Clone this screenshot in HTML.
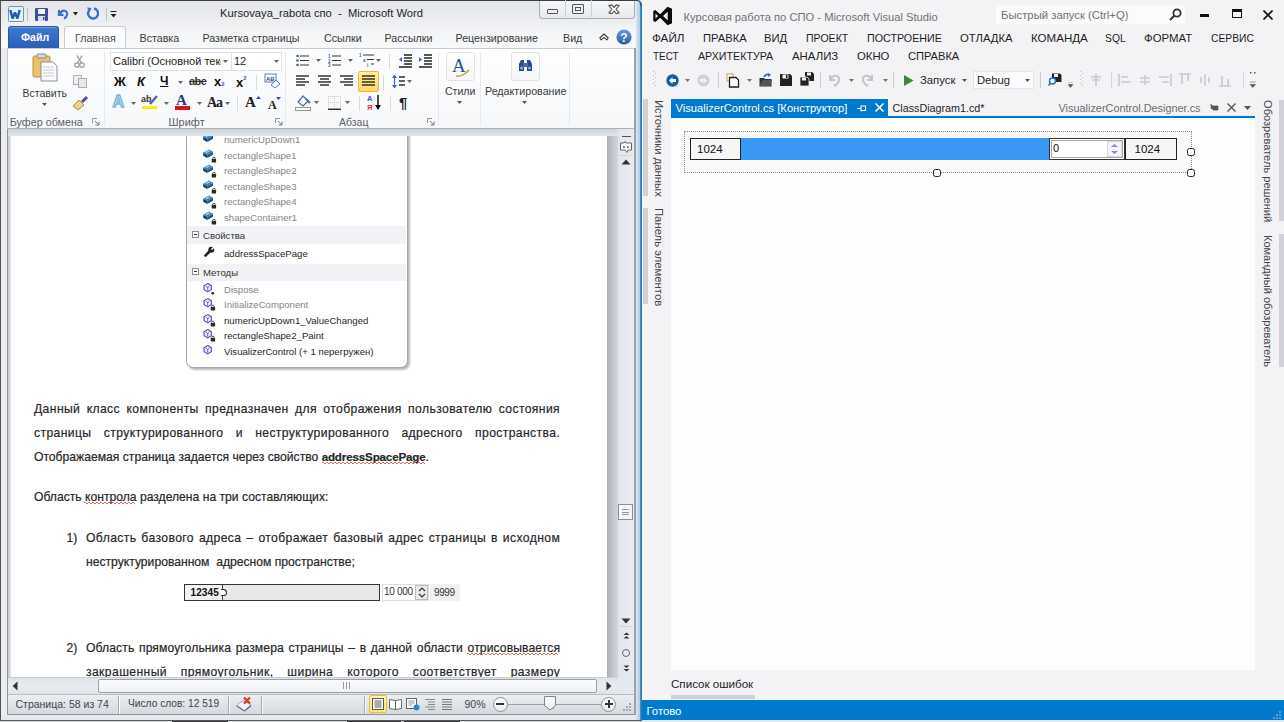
<!DOCTYPE html>
<html><head><meta charset="utf-8">
<style>
*{margin:0;padding:0;box-sizing:border-box}
html,body{width:1284px;height:722px;overflow:hidden;background:#dfe6ee;font-family:"Liberation Sans",sans-serif}
.a{position:absolute}
.t{position:absolute;white-space:nowrap;line-height:1}
#w{position:absolute;left:0;top:0;width:642px;height:722px;background:#e3e9f1;overflow:hidden}
#vs{position:absolute;left:641px;top:0;width:643px;height:722px;background:#eeeef2;overflow:hidden}
.j{position:absolute;white-space:nowrap;line-height:1;display:flex;justify-content:space-between}
</style></head><body>
<div id="w">
  <div class="a" style="left:0;top:0;width:636px;height:1px;background:#3a3e44"></div>
  <div class="a" style="left:0;top:0;width:1px;height:722px;background:#4e5258"></div>
  <div class="a" style="left:1px;top:1px;width:639px;height:25px;background:linear-gradient(#e3e5e8,#eef0f2)"></div>
  <!-- QAT -->
  <svg class="a" style="left:8px;top:6px" width="16" height="16" viewBox="0 0 16 16"><rect x="0.5" y="0.5" width="15" height="15" rx="1" fill="#dff2fb" stroke="#7a8ea6"/><path d="M2.3 4 L4.6 12.5 L7 6.5 L9.4 12.5 L11.7 4" fill="none" stroke="#1e5aa8" stroke-width="2.4" stroke-linejoin="bevel"/></svg>
  <div class="a" style="left:27px;top:8px;width:1px;height:13px;background:#b8c0ca"></div>
  <svg class="a" style="left:35px;top:8px" width="14" height="13" viewBox="0 0 14 13">
    <rect x="0" y="0" width="13" height="13" rx="1" fill="#3f4f9f"/>
    <rect x="3" y="1" width="7" height="5" fill="#f2f4f8"/>
    <rect x="3" y="8" width="7" height="5" fill="#d5dcef"/>
    <rect x="8" y="9" width="1.5" height="3" fill="#3f4f9f"/>
  </svg>
  <svg class="a" style="left:56px;top:7px" width="13" height="13" viewBox="0 0 13 13">
    <path d="M3 3 L3 8 L7.5 8" fill="none" stroke="#3a70c8" stroke-width="2.2"/>
    <path d="M4 7 C6 2 12 3 11 8 C10.5 10 9 11 8 11.5" fill="none" stroke="#3a70c8" stroke-width="2.2"/>
  </svg>
  <svg class="a" style="left:73px;top:12px" width="6" height="4"><path d="M0 0H5L2.5 3.5Z" fill="#222"/></svg>
  <svg class="a" style="left:86px;top:7px" width="13" height="13" viewBox="0 0 13 13">
    <path d="M8 1.5 A5 5 0 1 1 3 3.5" fill="none" stroke="#3a70c8" stroke-width="2.4"/>
    <path d="M1 0.5 L5.5 1 L3.5 5.5 Z" fill="#3a70c8"/>
  </svg>
  <div class="a" style="left:106px;top:8px;width:1px;height:13px;background:#b8c0ca"></div>
  <svg class="a" style="left:110px;top:11px" width="7" height="7"><rect x="0.5" y="0" width="6" height="1" fill="#222"/><path d="M0.5 3H6.5L3.5 6.5Z" fill="#222"/></svg>
  <div class="t" style="left:220px;top:8.2px;font-size:11.2px;color:#1e1e1e">Kursovaya_rabota спо&nbsp; - &nbsp;Microsoft Word</div>
  <!-- window controls -->
  <div class="a" style="left:539px;top:1px;width:96px;height:18px;border:1px solid #b4bcc6;border-top:none;border-radius:0 0 4px 4px;background:linear-gradient(#f6f7f8,#e8e9eb);border-color:#a9adb3"></div>
  <div class="a" style="left:565px;top:0;width:1px;height:17px;background:#c9d0d8"></div>
  <div class="a" style="left:591px;top:0;width:1px;height:17px;background:#c9d0d8"></div>
  <div class="a" style="left:547px;top:9px;width:11px;height:5px;border:1.5px solid #555;border-radius:1px"></div>
  <div class="a" style="left:572px;top:4px;width:12px;height:10px;border:1.5px solid #555;border-radius:1px"></div>
  <div class="a" style="left:575px;top:7px;width:6px;height:4px;border:1.2px solid #555"></div>
  <svg class="a" style="left:607.5px;top:4px" width="12" height="10.5" viewBox="0 0 13 11"><path d="M1 1.5 L4 0.8 L6.5 3.5 L9 0.8 L12 1.5 L8.8 5.5 L12 9.5 L9 10.2 L6.5 7.5 L4 10.2 L1 9.5 L4.2 5.5Z" fill="#fff" stroke="#555" stroke-width="1.3" stroke-linejoin="round"/></svg>
  <!-- tabs row -->
  <div class="a" style="left:1px;top:26px;width:639px;height:22px;background:linear-gradient(#f2f3f5,#f8f9fa)"></div>
  <div class="a" style="left:8px;top:26px;width:51px;height:22px;background:linear-gradient(#4079d0,#2a5db8);border:1px solid #2a55a8;border-bottom:none;box-shadow:inset 0 1px 0 #6a9ae0;border-radius:3px 3px 0 0"></div>
  <div class="t" style="left:21px;top:32px;font-size:10.6px;font-weight:bold;color:#fff">Файл</div>
  <div class="a" style="left:64px;top:26px;width:62px;height:23px;background:linear-gradient(#fdfdfe,#fbfcfd);border:1px solid #c5ccd5;border-bottom:none;border-radius:3px 3px 0 0"></div>
  <div class="t" style="left:75px;top:32.8px;font-size:10.7px;color:#4a4a4a">Главная</div>
  <div class="t" style="left:139.5px;top:32.8px;font-size:10.7px;color:#3b3b3b">Вставка</div>
  <div class="t" style="left:202.5px;top:32.8px;font-size:10.7px;color:#3b3b3b">Разметка страницы</div>
  <div class="t" style="left:324px;top:32.8px;font-size:10.7px;color:#3b3b3b">Ссылки</div>
  <div class="t" style="left:384.5px;top:32.8px;font-size:10.7px;color:#3b3b3b">Рассылки</div>
  <div class="t" style="left:455.5px;top:32.8px;font-size:10.7px;color:#3b3b3b">Рецензирование</div>
  <div class="t" style="left:563px;top:32.8px;font-size:10.7px;color:#3b3b3b">Вид</div>
  <svg class="a" style="left:599px;top:33px" width="10" height="8" viewBox="0 0 10 8"><path d="M0.8 5 L5 1 L9.2 5 L7.8 6.8 L5 4.3 L2.2 6.8Z" fill="#fff" stroke="#3a3a3a" stroke-width="1.1" stroke-linejoin="round"/></svg>
  <svg class="a" style="left:616px;top:28.5px" width="16" height="16" viewBox="0 0 16 16"><defs><linearGradient id="hg" x1="0" y1="0" x2="0" y2="1"><stop offset="0" stop-color="#6a9ae0"/><stop offset="1" stop-color="#2e5aa8"/></linearGradient></defs><circle cx="8" cy="8" r="7.6" fill="url(#hg)"/><text x="8" y="12.8" font-family="Liberation Sans" font-weight="bold" font-size="12" fill="#eef6ff" text-anchor="middle">?</text></svg>
  <!-- ribbon -->
  <div class="a" style="left:7px;top:48px;width:628px;height:81px;background:linear-gradient(#fefefe,#f6f8fa);border:1px solid #c6ccd4;border-bottom:1px solid #a9b0b9"></div>
  <div class="a" style="left:104px;top:52px;width:1px;height:74px;background:#e6e9ed"></div>
  <div class="a" style="left:285px;top:52px;width:1px;height:74px;background:#e6e9ed"></div>
  <div class="a" style="left:438px;top:52px;width:1px;height:74px;background:#e6e9ed"></div>
  <div class="a" style="left:480px;top:52px;width:1px;height:74px;background:#e6e9ed"></div>
  <div class="a" style="left:569px;top:52px;width:1px;height:74px;background:#e6e9ed"></div>
  <!-- clipboard group -->
  <svg class="a" style="left:32px;top:53px" width="27" height="30" viewBox="0 0 27 30">
    <rect x="1" y="3" width="17" height="21" rx="1.5" fill="#e8c36a" stroke="#b89040"/>
    <rect x="5" y="1" width="9" height="4" rx="1" fill="#d8d8d8" stroke="#888"/>
    <path d="M9 9 H21 L25 13 V28 H9 Z" fill="#fbfbfb" stroke="#8a8f99"/>
    <path d="M11 14H22M11 17H22M11 20H22M11 23H22" stroke="#c8d0dc" stroke-width="1"/>
  </svg>
  <div class="t" style="left:22.5px;top:88px;font-size:10.5px;color:#3b3b3b">Вставить</div>
  <svg class="a" style="left:42px;top:103px" width="6" height="4"><path d="M0 0H5L2.5 3Z" fill="#555"/></svg>
  <svg class="a" style="left:74px;top:55px" width="11" height="13" viewBox="0 0 11 13"><path d="M3 0.5 L7.5 8 M8 0.5 L3.5 8" stroke="#9aa0a8" stroke-width="1.4"/><circle cx="3" cy="10" r="2.2" fill="none" stroke="#9aa0a8" stroke-width="1.3"/><circle cx="8" cy="10" r="2.2" fill="none" stroke="#9aa0a8" stroke-width="1.3"/></svg>
  <svg class="a" style="left:73px;top:75px" width="15" height="13" viewBox="0 0 15 13"><rect x="0.5" y="0.5" width="8" height="9" fill="#f0f0f0" stroke="#b0b4ba"/><rect x="5.5" y="3.5" width="8" height="9" fill="#e8e8e8" stroke="#a8acb2"/></svg>
  <svg class="a" style="left:72px;top:96px" width="17" height="15" viewBox="0 0 17 15"><path d="M1 10 L7 4 L12 9 L6 14 Z" fill="#e8d48a" stroke="#a89040"/><path d="M10 6 L15 1" stroke="#5b4aa0" stroke-width="3"/></svg>
  <div class="t" style="left:9.8px;top:116.8px;font-size:10.75px;color:#5a5e66">Буфер обмена</div>
  <svg class="a" style="left:92px;top:118px" width="8" height="8"><path d="M0.5 0.5H5M0.5 0.5V5" stroke="#999" fill="none"/><path d="M3 3L7 7M7 3.5V7H3.5" stroke="#777" fill="none"/></svg>
  <!-- font group -->
  <div class="a" style="left:110px;top:52px;width:172px;height:19px;background:#fff;border:1px solid #dde2e8"></div>
  <div class="a" style="left:231px;top:52px;width:1px;height:19px;background:#dde2e8"></div>
  <div class="t" style="left:113px;top:56px;font-size:11px;color:#222;width:108px;overflow:hidden">Calibri (Основной текст)</div>
  <svg class="a" style="left:223px;top:60px" width="6" height="4"><path d="M0 0H5L2.5 3Z" fill="#666"/></svg>
  <div class="t" style="left:234px;top:56px;font-size:11px;color:#222">12</div>
  <svg class="a" style="left:274px;top:60px" width="6" height="4"><path d="M0 0H5L2.5 3Z" fill="#666"/></svg>
  <div class="t" style="left:114px;top:75px;font-size:13px;font-weight:bold;color:#111">Ж</div>
  <div class="t" style="left:137px;top:75px;font-size:13px;font-weight:bold;font-style:italic;color:#111">К</div>
  <div class="t" style="left:160px;top:75px;font-size:12px;font-weight:bold;color:#111;text-decoration:underline">Ч</div>
  <svg class="a" style="left:178px;top:81px" width="6" height="4"><path d="M0 0H5L2.5 3Z" fill="#666"/></svg>
  <div class="t" style="left:189px;top:76px;font-size:11px;font-weight:bold;color:#333;letter-spacing:-0.5px;text-decoration:line-through">abe</div>
  <div class="t" style="left:214px;top:75px;font-size:13px;font-weight:bold;color:#111">x<span style="font-size:6px;color:#3a5fb0">2</span></div>
  <div class="t" style="left:236px;top:75px;font-size:13px;font-weight:bold;color:#111">x<span style="font-size:6px;vertical-align:7px;color:#3a5fb0">2</span></div>
  <div class="a" style="left:256px;top:75px;width:1px;height:15px;background:#d8dce2"></div>
  <svg class="a" style="left:264px;top:73px" width="17" height="16" viewBox="0 0 17 16"><rect x="1" y="1" width="11" height="8" fill="#fff" stroke="#6080b0"/><text x="2" y="8" font-size="6" font-family="Liberation Sans" font-weight="bold" fill="#2850a0">AB</text><path d="M7 12 L12 7 L16 11 L11 15 Z" fill="#f4f6fa" stroke="#6080b0"/></svg>
  <div class="t" style="left:112.5px;top:94px;font-size:16px;font-weight:bold;color:#d8eefc;-webkit-text-stroke:1.3px #7ab4e0">A</div>
  <svg class="a" style="left:131px;top:102px" width="6" height="4"><path d="M0 0H5L2.5 3Z" fill="#666"/></svg>
  <svg class="a" style="left:141px;top:93px" width="18" height="17" viewBox="0 0 18 17"><text x="0" y="9" font-size="9" font-family="Liberation Sans" font-weight="bold" fill="#333">ab</text><path d="M9 11 L16 3" stroke="#6a5ab8" stroke-width="2.5"/><rect x="1" y="13" width="15" height="3" fill="#f8f000"/></svg>
  <svg class="a" style="left:164px;top:102px" width="6" height="4"><path d="M0 0H5L2.5 3Z" fill="#666"/></svg>
  <div class="t" style="left:176px;top:93px;font-size:15px;font-family:'Liberation Serif';font-weight:bold;color:#1a3f8a">A</div>
  <div class="a" style="left:175px;top:106px;width:15px;height:4px;background:#e01010"></div>
  <svg class="a" style="left:197px;top:102px" width="6" height="4"><path d="M0 0H5L2.5 3Z" fill="#666"/></svg>
  <div class="t" style="left:207px;top:96px;font-size:14px;font-family:'Liberation Serif';font-weight:bold;color:#222;letter-spacing:-1px">Aa</div>
  <svg class="a" style="left:225px;top:102px" width="6" height="4"><path d="M0 0H5L2.5 3Z" fill="#666"/></svg>
  <div class="a" style="left:237px;top:96px;width:1px;height:15px;background:#d8dce2"></div>
  <div class="t" style="left:245px;top:95px;font-size:15px;font-family:'Liberation Serif';font-weight:bold;color:#222">A</div>
  <svg class="a" style="left:256px;top:96px" width="5" height="4"><path d="M0 3H5L2.5 0Z" fill="#3050a0"/></svg>
  <div class="t" style="left:268px;top:99px;font-size:12px;font-family:'Liberation Serif';font-weight:bold;color:#222">A</div>
  <svg class="a" style="left:276px;top:97px" width="5" height="4"><path d="M0 0H5L2.5 3Z" fill="#3050a0"/></svg>
  <div class="t" style="left:168.5px;top:116.8px;font-size:11px;color:#5a5e66">Шрифт</div>
  <svg class="a" style="left:275px;top:118px" width="8" height="8"><path d="M0.5 0.5H5M0.5 0.5V5" stroke="#999" fill="none"/><path d="M3 3L7 7M7 3.5V7H3.5" stroke="#777" fill="none"/></svg>
  <!-- paragraph group -->
  <svg class="a" style="left:296px;top:54px" width="14" height="13" viewBox="0 0 14 13"><g fill="#3a5fa8"><circle cx="1.5" cy="2" r="1.3"/><circle cx="1.5" cy="6.5" r="1.3"/><circle cx="1.5" cy="11" r="1.3"/></g><g stroke="#333" stroke-width="1.2"><path d="M4 2H13M4 6.5H13M4 11H13"/></g></svg>
  <svg class="a" style="left:316px;top:59px" width="6" height="4"><path d="M0 0H5L2.5 3Z" fill="#666"/></svg>
  <svg class="a" style="left:328px;top:54px" width="14" height="13" viewBox="0 0 14 13"><g fill="#3a5fa8" font-size="4.5" font-family="Liberation Sans" font-weight="bold"><text x="0" y="4">1</text><text x="0" y="8.5">2</text><text x="0" y="13">3</text></g><g stroke="#333" stroke-width="1.2"><path d="M4 2H13M4 6.5H13M4 11H13"/></g></svg>
  <svg class="a" style="left:348px;top:59px" width="6" height="4"><path d="M0 0H5L2.5 3Z" fill="#666"/></svg>
  <svg class="a" style="left:359px;top:53px" width="18" height="15" viewBox="0 0 18 15"><g fill="#3a5fa8" font-size="4.5" font-family="Liberation Sans" font-weight="bold"><text x="0" y="4">1</text><text x="4" y="8.5">a</text><text x="8" y="14">i</text></g><g stroke="#333" stroke-width="1.2"><path d="M4 2H15M8 6.5H15M12 11H15"/></g></svg>
  <svg class="a" style="left:376px;top:59px" width="6" height="4"><path d="M0 0H5L2.5 3Z" fill="#666"/></svg>
  <div class="a" style="left:389px;top:54px;width:1px;height:15px;background:#d8dce2"></div>
  <svg class="a" style="left:398px;top:53px" width="15" height="15" viewBox="0 0 15 15"><g stroke="#222" stroke-width="1.3"><path d="M6 2H14M6 5H14M6 8H14M6 11H14M1 14H14"/></g><path d="M1 6.5L4 4V9Z" fill="#3a6ab8"/></svg>
  <svg class="a" style="left:418px;top:53px" width="15" height="15" viewBox="0 0 15 15"><g stroke="#222" stroke-width="1.3"><path d="M6 2H14M6 5H14M6 8H14M6 11H14M1 14H14"/></g><path d="M4 6.5L1 4V9Z" fill="#3a6ab8"/></svg>
  <svg class="a" style="left:296px;top:75px" width="14" height="12" viewBox="0 0 14 12"><g stroke="#333" stroke-width="1.4"><path d="M0 1H13M0 4H9M0 7H13M0 10H9"/></g></svg>
  <svg class="a" style="left:318px;top:75px" width="14" height="12" viewBox="0 0 14 12"><g stroke="#333" stroke-width="1.4"><path d="M0 1H13M2 4H11M0 7H13M2 10H11"/></g></svg>
  <svg class="a" style="left:340px;top:75px" width="14" height="12" viewBox="0 0 14 12"><g stroke="#333" stroke-width="1.4"><path d="M0 1H13M4 4H13M0 7H13M4 10H13"/></g></svg>
  <div class="a" style="left:358px;top:71px;width:21px;height:21px;background:linear-gradient(#fff2a8,#ffd860);border:1px solid #e2b840;border-radius:2px"></div>
  <svg class="a" style="left:362px;top:75px" width="14" height="12" viewBox="0 0 14 12"><g stroke="#3a3020" stroke-width="1.4"><path d="M0 1H13M0 4H13M0 7H13M0 10H13"/></g></svg>
  <div class="a" style="left:383px;top:75px;width:1px;height:15px;background:#d8dce2"></div>
  <svg class="a" style="left:392px;top:74px" width="22" height="15" viewBox="0 0 22 15"><path d="M2.5 1V14" stroke="#3a6ab8" stroke-width="1.2"/><path d="M0 4L2.5 0.5L5 4ZM0 11L2.5 14.5L5 11Z" fill="#3a6ab8"/><g stroke="#333" stroke-width="1.3"><path d="M7 3H13M7 7H13M7 11H13"/></g><path d="M15 6H20L17.5 9Z" fill="#666"/></svg>
  <svg class="a" style="left:295px;top:94px" width="24" height="17" viewBox="0 0 24 17"><path d="M3 8L8 2L13 7L8 12Z" fill="#fff" stroke="#4a6ab0" stroke-width="1.2"/><path d="M11 5 L15 9" stroke="#4a6ab0" stroke-width="2"/><rect x="0.5" y="13.5" width="15" height="3" fill="#fff" stroke="#999"/><path d="M19 7H24L21.5 10Z" fill="#666"/></svg>
  <svg class="a" style="left:328px;top:96px" width="23" height="14" viewBox="0 0 23 14"><g stroke="#bbb" stroke-width="0.8" stroke-dasharray="1 1" fill="none"><rect x="0.5" y="0.5" width="12" height="12"/><path d="M6.5 0V13M0 6.5H13"/></g><path d="M0 13.3H13" stroke="#222" stroke-width="1.3"/><path d="M17 5H22L19.5 8Z" fill="#666"/></svg>
  <div class="a" style="left:359px;top:96px;width:1px;height:15px;background:#d8dce2"></div>
  <svg class="a" style="left:367px;top:94px" width="15" height="17" viewBox="0 0 15 17"><text x="0" y="7" font-size="7.5" font-family="Liberation Sans" font-weight="bold" fill="#3a5aa8">A</text><text x="0" y="15.5" font-size="7.5" font-family="Liberation Sans" font-weight="bold" fill="#d03030">Я</text><path d="M11 1V15" stroke="#111" stroke-width="1.5"/><path d="M8 11L11 16L14 11Z" fill="#111"/></svg>
  <div class="a" style="left:390px;top:96px;width:1px;height:15px;background:#d8dce2"></div>
  <div class="t" style="left:399px;top:95px;font-size:15px;font-weight:bold;color:#222">¶</div>
  <div class="t" style="left:339px;top:117px;font-size:10.5px;color:#5a5e66">Абзац</div>
  <svg class="a" style="left:427px;top:118px" width="8" height="8"><path d="M0.5 0.5H5M0.5 0.5V5" stroke="#999" fill="none"/><path d="M3 3L7 7M7 3.5V7H3.5" stroke="#777" fill="none"/></svg>
  <!-- styles group -->
  <div class="a" style="left:446px;top:52px;width:29px;height:29px;border:1px solid #dfe3e8;border-radius:3px;background:linear-gradient(#fff,#f4f6f8)"></div>
  <div class="t" style="left:452px;top:56px;font-size:19px;font-family:'Liberation Serif';color:#2a4f9a">A</div>
  <svg class="a" style="left:455px;top:68px" width="16" height="10" viewBox="0 0 16 10"><path d="M1 8 C5 9 11 6 14 2" fill="none" stroke="#d0a030" stroke-width="1.6"/></svg>
  <div class="t" style="left:445px;top:86px;font-size:10.5px;color:#3b3b3b">Стили</div>
  <svg class="a" style="left:457px;top:101px" width="6" height="4"><path d="M0 0H5L2.5 3Z" fill="#555"/></svg>
  <div class="a" style="left:511px;top:52px;width:29px;height:29px;border:1px solid #dfe3e8;border-radius:3px;background:linear-gradient(#fff,#f4f6f8)"></div>
  <svg class="a" style="left:518px;top:59px" width="15" height="13" viewBox="0 0 15 13"><path d="M1 12V5L3 1H6V12ZM9 12V1H12L14 5V12Z" fill="#2a4a8a"/><rect x="5" y="4" width="5" height="4" fill="#4a6aaa"/><circle cx="3.5" cy="9" r="1.5" fill="#8ab0e0"/><circle cx="11.5" cy="9" r="1.5" fill="#8ab0e0"/></svg>
  <div class="t" style="left:485px;top:86px;font-size:10.7px;color:#3b3b3b">Редактирование</div>
  <svg class="a" style="left:522px;top:101px" width="6" height="4"><path d="M0 0H5L2.5 3Z" fill="#555"/></svg>
  <!-- gray band -->
  <div class="a" style="left:1px;top:129px;width:634px;height:7px;background:linear-gradient(#cfd5dc,#e1e5ea)"></div>
<div class="a" style="left:8px;top:136px;width:599px;height:541px;overflow:hidden;background:#fff">
<div class="a" style="left:-8px;top:-136px;width:1284px;height:722px">
<div class="a" style="left:8px;top:136px;width:3px;height:541px;background:linear-gradient(90deg,#c4c6ca,#e6e8eb)"></div>
<div class="a" style="left:186px;top:100px;width:222px;height:268px;border:1px solid #a3a8ae;border-top:none;border-radius:0 0 7px 7px;background:#fff;box-shadow:2px 2px 2px rgba(0,0,0,.28)"></div>
<div class="a" style="left:187px;top:226px;width:219px;height:18px;background:#f0f2f5"></div>
<div class="a" style="left:187px;top:264px;width:219px;height:17px;background:#f0f2f5"></div>
<div class="t" style="left:224px;top:134.5px;font-size:9.6px;color:#868686">numericUpDown1</div>
<svg class="a" style="left:203px;top:133px" width="14" height="14" viewBox="0 0 14 14"><path d="M0.2 3.8 L6 0.5 L10 2.7 L4.2 6Z" fill="#3a88c8"/><path d="M0.2 3.8 L4.2 6 V9 L0.2 6.8Z" fill="#0e3e68"/><path d="M4.2 6 L10 2.7 V5.8 L4.2 9Z" fill="#165890"/><path d="M3 3.6 L6.5 1.8" stroke="#e8f4ff" stroke-width="0.9"/></svg>
<div class="t" style="left:224px;top:150.7px;font-size:9.6px;color:#868686">rectangleShape1</div>
<svg class="a" style="left:203px;top:149px" width="14" height="14" viewBox="0 0 14 14"><path d="M0.2 3.8 L6 0.5 L10 2.7 L4.2 6Z" fill="#3a88c8"/><path d="M0.2 3.8 L4.2 6 V9 L0.2 6.8Z" fill="#0e3e68"/><path d="M4.2 6 L10 2.7 V5.8 L4.2 9Z" fill="#165890"/><path d="M3 3.6 L6.5 1.8" stroke="#e8f4ff" stroke-width="0.9"/><rect x="8.7" y="10" width="4.4" height="3.4" rx="0.5" fill="#2a2a2a"/><path d="M9.7 10.2 V9.4 A1.2 1.2 0 0 1 12.1 9.4 V10.2" stroke="#2a2a2a" fill="none" stroke-width="0.9"/></svg>
<div class="t" style="left:224px;top:166.2px;font-size:9.6px;color:#868686">rectangleShape2</div>
<svg class="a" style="left:203px;top:164px" width="14" height="14" viewBox="0 0 14 14"><path d="M0.2 3.8 L6 0.5 L10 2.7 L4.2 6Z" fill="#3a88c8"/><path d="M0.2 3.8 L4.2 6 V9 L0.2 6.8Z" fill="#0e3e68"/><path d="M4.2 6 L10 2.7 V5.8 L4.2 9Z" fill="#165890"/><path d="M3 3.6 L6.5 1.8" stroke="#e8f4ff" stroke-width="0.9"/><rect x="8.7" y="10" width="4.4" height="3.4" rx="0.5" fill="#2a2a2a"/><path d="M9.7 10.2 V9.4 A1.2 1.2 0 0 1 12.1 9.4 V10.2" stroke="#2a2a2a" fill="none" stroke-width="0.9"/></svg>
<div class="t" style="left:224px;top:181.7px;font-size:9.6px;color:#868686">rectangleShape3</div>
<svg class="a" style="left:203px;top:180px" width="14" height="14" viewBox="0 0 14 14"><path d="M0.2 3.8 L6 0.5 L10 2.7 L4.2 6Z" fill="#3a88c8"/><path d="M0.2 3.8 L4.2 6 V9 L0.2 6.8Z" fill="#0e3e68"/><path d="M4.2 6 L10 2.7 V5.8 L4.2 9Z" fill="#165890"/><path d="M3 3.6 L6.5 1.8" stroke="#e8f4ff" stroke-width="0.9"/><rect x="8.7" y="10" width="4.4" height="3.4" rx="0.5" fill="#2a2a2a"/><path d="M9.7 10.2 V9.4 A1.2 1.2 0 0 1 12.1 9.4 V10.2" stroke="#2a2a2a" fill="none" stroke-width="0.9"/></svg>
<div class="t" style="left:224px;top:197.2px;font-size:9.6px;color:#868686">rectangleShape4</div>
<svg class="a" style="left:203px;top:195px" width="14" height="14" viewBox="0 0 14 14"><path d="M0.2 3.8 L6 0.5 L10 2.7 L4.2 6Z" fill="#3a88c8"/><path d="M0.2 3.8 L4.2 6 V9 L0.2 6.8Z" fill="#0e3e68"/><path d="M4.2 6 L10 2.7 V5.8 L4.2 9Z" fill="#165890"/><path d="M3 3.6 L6.5 1.8" stroke="#e8f4ff" stroke-width="0.9"/><rect x="8.7" y="10" width="4.4" height="3.4" rx="0.5" fill="#2a2a2a"/><path d="M9.7 10.2 V9.4 A1.2 1.2 0 0 1 12.1 9.4 V10.2" stroke="#2a2a2a" fill="none" stroke-width="0.9"/></svg>
<div class="t" style="left:224px;top:212.7px;font-size:9.6px;color:#868686">shapeContainer1</div>
<svg class="a" style="left:203px;top:211px" width="14" height="14" viewBox="0 0 14 14"><path d="M0.2 3.8 L6 0.5 L10 2.7 L4.2 6Z" fill="#3a88c8"/><path d="M0.2 3.8 L4.2 6 V9 L0.2 6.8Z" fill="#0e3e68"/><path d="M4.2 6 L10 2.7 V5.8 L4.2 9Z" fill="#165890"/><path d="M3 3.6 L6.5 1.8" stroke="#e8f4ff" stroke-width="0.9"/><rect x="8.7" y="10" width="4.4" height="3.4" rx="0.5" fill="#2a2a2a"/><path d="M9.7 10.2 V9.4 A1.2 1.2 0 0 1 12.1 9.4 V10.2" stroke="#2a2a2a" fill="none" stroke-width="0.9"/></svg>
<div class="t" style="left:224px;top:248.7px;font-size:9.6px;color:#262626">addressSpacePage</div>
<svg class="a" style="left:204px;top:246px" width="11" height="11" viewBox="0 0 11 11"><path d="M1.5 9.5 L6 5" stroke="#222" stroke-width="2.6" stroke-linecap="round"/><circle cx="7.3" cy="3.7" r="3" fill="#222"/><path d="M7.5 3.5 L10 1" stroke="#fff" stroke-width="1.6"/></svg>
<div class="t" style="left:224px;top:284.6px;font-size:9.6px;color:#868686">Dispose</div>
<svg class="a" style="left:202px;top:282px" width="14" height="14" viewBox="0 0 14 14"><path d="M5.7 1.6 L9.3 3.7 V7.7 L5.7 9.8 L2.1 7.7 V3.7Z" fill="#f4f0fb" stroke="#6a50b8" stroke-width="1.2"/><path d="M5.7 5 V8.6 M4 4.2 L5.7 5.4 L7.4 4.2" stroke="#6a50b8" stroke-width="0.9" fill="none"/><circle cx="10.8" cy="11.3" r="1.3" fill="#222"/></svg>
<div class="t" style="left:224px;top:300.1px;font-size:9.6px;color:#868686">InitializeComponent</div>
<svg class="a" style="left:202px;top:297px" width="14" height="14" viewBox="0 0 14 14"><path d="M5.7 1.6 L9.3 3.7 V7.7 L5.7 9.8 L2.1 7.7 V3.7Z" fill="#f4f0fb" stroke="#6a50b8" stroke-width="1.2"/><path d="M5.7 5 V8.6 M4 4.2 L5.7 5.4 L7.4 4.2" stroke="#6a50b8" stroke-width="0.9" fill="none"/><rect x="8.7" y="10" width="4.4" height="3.4" rx="0.5" fill="#2a2a2a"/><path d="M9.7 10.2 V9.4 A1.2 1.2 0 0 1 12.1 9.4 V10.2" stroke="#2a2a2a" fill="none" stroke-width="0.9"/></svg>
<div class="t" style="left:224px;top:315.6px;font-size:9.6px;color:#262626">numericUpDown1_ValueChanged</div>
<svg class="a" style="left:202px;top:313px" width="14" height="14" viewBox="0 0 14 14"><path d="M5.7 1.6 L9.3 3.7 V7.7 L5.7 9.8 L2.1 7.7 V3.7Z" fill="#f4f0fb" stroke="#6a50b8" stroke-width="1.2"/><path d="M5.7 5 V8.6 M4 4.2 L5.7 5.4 L7.4 4.2" stroke="#6a50b8" stroke-width="0.9" fill="none"/><rect x="8.7" y="10" width="4.4" height="3.4" rx="0.5" fill="#2a2a2a"/><path d="M9.7 10.2 V9.4 A1.2 1.2 0 0 1 12.1 9.4 V10.2" stroke="#2a2a2a" fill="none" stroke-width="0.9"/></svg>
<div class="t" style="left:224px;top:331.1px;font-size:9.6px;color:#262626">rectangleShape2_Paint</div>
<svg class="a" style="left:202px;top:328px" width="14" height="14" viewBox="0 0 14 14"><path d="M5.7 1.6 L9.3 3.7 V7.7 L5.7 9.8 L2.1 7.7 V3.7Z" fill="#f4f0fb" stroke="#6a50b8" stroke-width="1.2"/><path d="M5.7 5 V8.6 M4 4.2 L5.7 5.4 L7.4 4.2" stroke="#6a50b8" stroke-width="0.9" fill="none"/><rect x="8.7" y="10" width="4.4" height="3.4" rx="0.5" fill="#2a2a2a"/><path d="M9.7 10.2 V9.4 A1.2 1.2 0 0 1 12.1 9.4 V10.2" stroke="#2a2a2a" fill="none" stroke-width="0.9"/></svg>
<div class="t" style="left:224px;top:346.6px;font-size:9.6px;color:#262626">VisualizerControl (+ 1 перегружен)</div>
<svg class="a" style="left:202px;top:344px" width="14" height="14" viewBox="0 0 14 14"><path d="M5.7 1.6 L9.3 3.7 V7.7 L5.7 9.8 L2.1 7.7 V3.7Z" fill="#f4f0fb" stroke="#6a50b8" stroke-width="1.2"/><path d="M5.7 5 V8.6 M4 4.2 L5.7 5.4 L7.4 4.2" stroke="#6a50b8" stroke-width="0.9" fill="none"/></svg>
<div class="t" style="left:203px;top:230.5px;font-size:9.6px;color:#333">Свойства</div>
<div class="a" style="left:192px;top:231px;width:7px;height:7px;border:1px solid #8a8f96;background:#fff"></div><div class="a" style="left:194px;top:234px;width:3px;height:1px;background:#333"></div>
<div class="t" style="left:203px;top:267.6px;font-size:9.6px;color:#333">Методы</div>
<div class="a" style="left:192px;top:268px;width:7px;height:7px;border:1px solid #8a8f96;background:#fff"></div><div class="a" style="left:194px;top:271px;width:3px;height:1px;background:#333"></div>
<div class="j" style="left:34px;top:403.0px;width:526.2px;font-size:12.15px;color:#262626;letter-spacing:0.4px;-webkit-text-stroke:0.2px #2a2a2a;"><span>Данный</span><span>класс</span><span>компоненты</span><span>предназначен</span><span>для</span><span>отображения</span><span>пользователю</span><span>состояния</span></div>
<div class="j" style="left:34px;top:427.0px;width:526.2px;font-size:12.15px;color:#262626;letter-spacing:0.4px;-webkit-text-stroke:0.2px #2a2a2a;"><span>страницы</span><span>структурированного</span><span>и</span><span>неструктурированного</span><span>адресного</span><span>пространства.</span></div>
<div class="t" style="left:34px;top:451.1px;font-size:12.15px;color:#262626;-webkit-text-stroke:0.2px #2a2a2a;">Отображаемая страница задается через свойство <b style="font-size:11.6px;letter-spacing:-0.15px">addressSpacePage</b>.</div>
<div class="t" style="left:34px;top:491.0px;font-size:12.15px;color:#262626;-webkit-text-stroke:0.2px #2a2a2a;">Область контрола разделена на три составляющих:</div>
<div class="t" style="left:66.5px;top:532.3px;font-size:12.15px;color:#262626;-webkit-text-stroke:0.2px #2a2a2a;">1)</div>
<div class="j" style="left:86px;top:532.3px;width:474.2px;font-size:12.15px;color:#262626;letter-spacing:0.4px;-webkit-text-stroke:0.2px #2a2a2a;"><span>Область</span><span>базового</span><span>адреса</span><span>–</span><span>отображает</span><span>базовый</span><span>адрес</span><span>страницы</span><span>в</span><span>исходном</span></div>
<div class="t" style="left:86px;top:556.4px;font-size:12.15px;color:#262626;-webkit-text-stroke:0.2px #2a2a2a;">неструктурированном&nbsp; адресном пространстве;</div>
<div class="t" style="left:66.5px;top:641.9px;font-size:12.15px;color:#262626;-webkit-text-stroke:0.2px #2a2a2a;">2)</div>
<div class="j" style="left:86px;top:641.9px;width:474.2px;font-size:12.15px;color:#262626;letter-spacing:0.1px;-webkit-text-stroke:0.2px #2a2a2a;"><span>Область</span><span>прямоугольника</span><span>размера</span><span>страницы</span><span>–</span><span>в</span><span>данной</span><span>области</span><span>отрисовывается</span></div>
<div class="j" style="left:86px;top:665.8px;width:474.2px;font-size:12.15px;color:#262626;letter-spacing:0.4px;-webkit-text-stroke:0.2px #2a2a2a;"><span>закрашенный</span><span>прямоугольник,</span><span>ширина</span><span>которого</span><span>соответствует</span><span>размеру</span></div>
<svg class="a" style="left:84px;top:502px" width="53" height="3"><path d="M0 1 L1 0 L3 2 L5 0 L7 2 L9 0 L11 2 L13 0 L15 2 L17 0 L19 2 L21 0 L23 2 L25 0 L27 2 L29 0 L31 2 L33 0 L35 2 L37 0 L39 2 L41 0 L43 2 L45 0 L47 2 L49 0 L51 2" fill="none" stroke="#e04040" stroke-width="0.8"/></svg>
<svg class="a" style="left:322px;top:462px" width="104" height="3"><path d="M0 1 L1 0 L3 2 L5 0 L7 2 L9 0 L11 2 L13 0 L15 2 L17 0 L19 2 L21 0 L23 2 L25 0 L27 2 L29 0 L31 2 L33 0 L35 2 L37 0 L39 2 L41 0 L43 2 L45 0 L47 2 L49 0 L51 2 L53 0 L55 2 L57 0 L59 2 L61 0 L63 2 L65 0 L67 2 L69 0 L71 2 L73 0 L75 2 L77 0 L79 2 L81 0 L83 2 L85 0 L87 2 L89 0 L91 2 L93 0 L95 2 L97 0 L99 2 L101 0 L103 2" fill="none" stroke="#e04040" stroke-width="0.8"/></svg>
<svg class="a" style="left:467px;top:653px" width="93" height="3"><path d="M0 1 L1 0 L3 2 L5 0 L7 2 L9 0 L11 2 L13 0 L15 2 L17 0 L19 2 L21 0 L23 2 L25 0 L27 2 L29 0 L31 2 L33 0 L35 2 L37 0 L39 2 L41 0 L43 2 L45 0 L47 2 L49 0 L51 2 L53 0 L55 2 L57 0 L59 2 L61 0 L63 2 L65 0 L67 2 L69 0 L71 2 L73 0 L75 2 L77 0 L79 2 L81 0 L83 2 L85 0 L87 2 L89 0 L91 2" fill="none" stroke="#e04040" stroke-width="0.8"/></svg>
<div class="a" style="left:184px;top:584px;width:196px;height:17px;background:#e8e8e8;border:1px solid #333"></div>
<div class="a" style="left:185px;top:585px;width:37px;height:15px;background:#f2f2f2"></div>
<div class="a" style="left:222px;top:585px;width:1px;height:15px;background:#444"></div>
<div class="a" style="left:221px;top:589px;width:6px;height:7px;border:1.2px solid #333;border-left:none;border-radius:0 50% 50% 0;background:#fff"></div>
<div class="t" style="left:190.5px;top:587.5px;font-size:10px;font-weight:bold;color:#111;letter-spacing:0.1px">12345</div>
<div class="a" style="left:382px;top:584px;width:47px;height:17px;background:#fff;border:1px solid #ddd"></div>
<div class="t" style="left:384px;top:587px;font-size:10px;color:#333;letter-spacing:-0.3px">10 000</div>
<div class="a" style="left:415px;top:585px;width:13px;height:15px;background:#eaeaea;border:1px solid #bbb"></div>
<svg class="a" style="left:418px;top:587px" width="8" height="11"><path d="M1 4L4 1L7 4M1 7L4 10L7 7" fill="none" stroke="#333" stroke-width="1.2"/></svg>
<div class="a" style="left:430px;top:584px;width:30px;height:17px;background:#f0f0f0"></div>
<div class="t" style="left:434px;top:587.5px;font-size:10px;color:#333;letter-spacing:-0.4px">9999</div>
</div></div>  <!-- vertical scroll area -->
  <div class="a" style="left:607px;top:136px;width:11px;height:541px;background:linear-gradient(90deg,#a9adb4,#c5c9cf 60%,#d3d7dc)"></div>
  <div class="a" style="left:618px;top:129px;width:16px;height:548px;background:linear-gradient(90deg,#e2e6ec,#e9edf2)"></div>
  <div class="a" style="left:622px;top:135.5px;width:9px;height:1.5px;background:#555"></div>
  <svg class="a" style="left:619px;top:140px" width="14" height="14" viewBox="0 0 14 14"><path d="M1.5 3 H5 L6 1.5 L7 3 H12.5 V10 H9 L8 12.5 L6 10 H1.5Z" fill="#fff" stroke="#666" stroke-width="1"/><circle cx="5" cy="7" r="1" fill="#666"/><circle cx="9" cy="7" r="1" fill="#666"/></svg>
  <div class="a" style="left:619px;top:155px;width:14px;height:1px;background:#d0d5dc"></div>
  <svg class="a" style="left:621px;top:159px" width="10" height="6"><path d="M0.5 5.5L5 0.5L9.5 5.5Z" fill="#333"/></svg>
  <div class="a" style="left:618px;top:504px;width:15px;height:16px;background:linear-gradient(90deg,#fdfdfe,#eef1f5);border:1px solid #8a9099"></div>
  <div class="a" style="left:622px;top:509px;width:7px;height:6px;border-top:1px solid #999;border-bottom:1px solid #999"></div>
  <div class="a" style="left:622px;top:511.5px;width:7px;height:1px;background:#999"></div>
  <svg class="a" style="left:621px;top:618px" width="10" height="6"><path d="M0.5 0.5L5 5.5L9.5 0.5Z" fill="#333"/></svg>
  <div class="a" style="left:619px;top:626px;width:14px;height:1px;background:#d0d5dc"></div>
  <svg class="a" style="left:623px;top:632px" width="7" height="7"><path d="M0.5 3L3.5 0.5L6.5 3ZM0.5 6.5L3.5 4L6.5 6.5Z" fill="#333"/></svg>
  <div class="a" style="left:622px;top:649px;width:8px;height:8px;border:1.1px solid #666;border-radius:50%"></div>
  <svg class="a" style="left:623px;top:665px" width="7" height="7"><path d="M0.5 0.5L3.5 3L6.5 0.5ZM0.5 4L3.5 6.5L6.5 4Z" fill="#333"/></svg>
  <!-- frame right -->
  <div class="a" style="left:634px;top:48px;width:2px;height:672px;background:#9ca2aa"></div>
  <div class="a" style="left:636px;top:0;width:4px;height:722px;background:linear-gradient(90deg,#e2e9f0,#c4d6e6 50%,#a6d2f2)"></div>
  <div class="a" style="left:632px;top:0;width:10px;height:10px;border-top-right-radius:5px;border-top:1.2px solid #3a4650;border-right:2px solid #2a5a88;background:transparent"></div><div class="a" style="left:640px;top:6px;width:2px;height:716px;background:linear-gradient(90deg,#4a98d8,#2a6aa8)"></div>
  <!-- frame left -->
  <div class="a" style="left:1px;top:48px;width:6px;height:672px;background:#eaecef"></div>
  <div class="a" style="left:7px;top:129px;width:1px;height:586px;background:#8e9298"></div>
  <!-- hscroll -->
  <div class="a" style="left:8px;top:677px;width:610px;height:17px;background:linear-gradient(#dde2e8,#e8ecf1 50%,#dfe4ea)"></div>
  <div class="a" style="left:8px;top:677px;width:610px;height:1px;background:#c8ced6"></div>
  <svg class="a" style="left:12px;top:681px" width="6" height="10"><path d="M5.5 0.5L0.5 5L5.5 9.5Z" fill="#333"/></svg>
  <div class="a" style="left:98px;top:679px;width:499px;height:14px;background:linear-gradient(#fbfcfd,#eef1f5);border:1px solid #9aa1aa;border-radius:2px"></div>
  <div class="a" style="left:343px;top:682px;width:7px;height:7px;border-left:1px solid #999;border-right:1px solid #999"></div>
  <div class="a" style="left:346px;top:682px;width:1px;height:7px;background:#999"></div>
  <svg class="a" style="left:606px;top:681px" width="6" height="10"><path d="M0.5 0.5L5.5 5L0.5 9.5Z" fill="#333"/></svg>
  <!-- status bar -->
  <div class="a" style="left:8px;top:694px;width:626px;height:21px;background:linear-gradient(#eceef1,#d5d9de);border-top:1px solid #b8bdc4;border-bottom:1px solid #8e939a"></div>
  <div class="t" style="left:15.5px;top:699px;font-size:10.5px;color:#3d4450">Страница: 58 из 74</div>
  <div class="a" style="left:118px;top:696px;width:1px;height:18px;background:#a4a9b0"></div><div class="a" style="left:119px;top:696px;width:1px;height:18px;background:#fafbfc"></div>
  <div class="t" style="left:128px;top:699px;font-size:10.2px;color:#3d4450">Число слов: 12 519</div>
  <div class="a" style="left:228px;top:696px;width:1px;height:18px;background:#a4a9b0"></div><div class="a" style="left:229px;top:696px;width:1px;height:18px;background:#fafbfc"></div>
  <svg class="a" style="left:235px;top:696px" width="18" height="16" viewBox="0 0 18 16"><path d="M1.5 9.5 L8 4.5 L16 9 L9.5 14.5Z" fill="#f4f6fb" stroke="#8a9ac0" stroke-width="0.8"/><path d="M1.5 9.5 L9.5 14.5 L16 9 V10.5 L9.5 15.5 L1.5 10.5Z" fill="#3a5a98"/><path d="M9 1.5 L15 7.5 M15 1.5 L9 7.5" stroke="#d83a20" stroke-width="2.2"/></svg>
  <div class="a" style="left:261px;top:696px;width:1px;height:18px;background:#a4a9b0"></div><div class="a" style="left:262px;top:696px;width:1px;height:18px;background:#fafbfc"></div>
  <div class="a" style="left:364px;top:696px;width:1px;height:18px;background:#a4a9b0"></div><div class="a" style="left:365px;top:696px;width:1px;height:18px;background:#fafbfc"></div>
  <div class="a" style="left:369px;top:695px;width:18px;height:18px;background:linear-gradient(#fff6b8,#ffe27a);border:1px solid #e8c040;border-radius:2px"></div>
  <svg class="a" style="left:372px;top:698px" width="12" height="12"><rect x="0.5" y="0.5" width="11" height="11" fill="#fffef0" stroke="#555"/><path d="M2.5 3H9.5M2.5 5H9.5M2.5 7H9.5M2.5 9H9.5" stroke="#444" stroke-width="0.9"/></svg>
  <svg class="a" style="left:389px;top:698px" width="13" height="12"><path d="M0.5 1.5 L6.5 2.5 L12.5 1.5 V10.5 L6.5 11.5 L0.5 10.5Z" fill="#fff" stroke="#666"/><path d="M6.5 2.5V11.5" stroke="#666"/></svg>
  <svg class="a" style="left:406px;top:697px" width="14" height="14"><rect x="0.5" y="1.5" width="10" height="10" fill="#fff" stroke="#666"/><path d="M2.5 4H8.5M2.5 6H8.5M2.5 8H6" stroke="#777" stroke-width="0.8"/><circle cx="10.5" cy="10.5" r="3" fill="#2a8ad0"/></svg>
  <svg class="a" style="left:424px;top:698px" width="12" height="12"><path d="M1 1.5H11M4 4H11M4 6.5H11M1 9H11M4 11.5H11" stroke="#888" stroke-width="1"/></svg>
  <svg class="a" style="left:441px;top:698px" width="12" height="12"><path d="M1 1.5H11M1 4H11M1 6.5H11M1 9H11M1 11.5H11" stroke="#777" stroke-width="1.1"/></svg>
  <div class="t" style="left:464.5px;top:699px;font-size:10.5px;color:#3d4450">90%</div>
  <div class="a" style="left:492.5px;top:696.5px;width:15px;height:15px;border:1px solid #8a9099;border-radius:50%;background:linear-gradient(#fff,#e8ecf0)"></div>
  <div class="a" style="left:496px;top:703px;width:8px;height:2px;background:#333"></div>
  <div class="a" style="left:508px;top:703.5px;width:93px;height:1px;background:#9aa1aa"></div>
  <div class="a" style="left:553px;top:699px;width:1px;height:10px;background:#999"></div>
  <svg class="a" style="left:544px;top:696px" width="12" height="15"><path d="M0.5 0.5H11.5V9.5L6 14L0.5 9.5Z" fill="#f4f6f8" stroke="#7a828c"/></svg>
  <div class="a" style="left:601px;top:696.5px;width:15px;height:15px;border:1px solid #8a9099;border-radius:50%;background:linear-gradient(#fff,#e8ecf0)"></div>
  <div class="a" style="left:604.5px;top:703px;width:8px;height:2px;background:#333"></div>
  <div class="a" style="left:607.5px;top:700px;width:2px;height:8px;background:#333"></div>
  <svg class="a" style="left:622px;top:702px" width="10" height="10"><g fill="#a0a8b2"><rect x="7" y="1" width="2" height="2"/><rect x="4" y="4" width="2" height="2"/><rect x="7" y="4" width="2" height="2"/><rect x="1" y="7" width="2" height="2"/><rect x="4" y="7" width="2" height="2"/><rect x="7" y="7" width="2" height="2"/></g></svg>
  <div class="a" style="left:1px;top:715px;width:635px;height:5px;background:#e6e9ed"></div>
  <div class="a" style="left:0;top:720px;width:642px;height:1px;background:#55585c"></div><div class="a" style="left:0;top:721px;width:642px;height:1px;background:#d8dadd"></div><div class="a" style="left:172px;top:721px;width:56px;height:1px;background:#333"></div><div class="a" style="left:347px;top:721px;width:54px;height:1px;background:#333"></div><div class="a" style="left:404px;top:721px;width:56px;height:1px;background:#333"></div>
</div><div id="vs2" class="a" style="left:0;top:0;width:1284px;height:722px;clip-path:inset(0 0 0 642px);background:#f3f3f6">
<svg class="a" style="left:653px;top:6px" width="20" height="20" viewBox="0 0 20 20"><path d="M0.3 5 L2.3 4 L7.2 8.3 L14.5 0.8 L19 2.8 V17.3 L14.5 19.2 L7.2 11.7 L2.3 16 L0.3 15 Z M2.5 7.6 V12.4 L5 10 Z M10 10 L14.7 5.8 V14.2 Z" fill="#0a0a0a" fill-rule="evenodd"/></svg>
<div class="t" style="left:683.5px;top:11.5px;font-size:11.2px;color:#717171">Курсовая работа по СПО - Microsoft Visual Studio</div>
<div class="a" style="left:996px;top:5px;width:189px;height:19px;background:#fbfbfc"></div>
<div class="t" style="left:1001px;top:9.6px;font-size:11.3px;color:#717171">Быстрый запуск (Ctrl+Q)</div>
<svg class="a" style="left:1169px;top:8px" width="13" height="13" viewBox="0 0 13 13"><circle cx="8" cy="5" r="3.6" fill="none" stroke="#333" stroke-width="1.8"/><path d="M5.5 7.5 L1 12" stroke="#333" stroke-width="2.2"/></svg>
<div class="a" style="left:1200px;top:14px;width:9px;height:3px;background:#111"></div>
<div class="a" style="left:1232px;top:9px;width:10px;height:9px;border:1.3px solid #111;border-top-width:3px"></div>
<svg class="a" style="left:1263px;top:10px" width="10" height="10"><path d="M0.5 0.5L9.5 9.5M9.5 0.5L0.5 9.5" stroke="#111" stroke-width="1.6"/></svg>
<div class="t" style="left:652.2px;top:33.1px;font-size:10.8px;color:#1e1e1e;transform:scaleX(1.080);transform-origin:0 0">ФАЙЛ</div>
<div class="t" style="left:702.8px;top:33.1px;font-size:10.8px;color:#1e1e1e;transform:scaleX(1.036);transform-origin:0 0">ПРАВКА</div>
<div class="t" style="left:764.2px;top:33.1px;font-size:10.8px;color:#1e1e1e;transform:scaleX(1.040);transform-origin:0 0">ВИД</div>
<div class="t" style="left:806.4px;top:33.1px;font-size:10.8px;color:#1e1e1e;transform:scaleX(0.977);transform-origin:0 0">ПРОЕКТ</div>
<div class="t" style="left:866.9px;top:33.1px;font-size:10.8px;color:#1e1e1e;transform:scaleX(0.992);transform-origin:0 0">ПОСТРОЕНИЕ</div>
<div class="t" style="left:959.8px;top:33.1px;font-size:10.8px;color:#1e1e1e;transform:scaleX(1.048);transform-origin:0 0">ОТЛАДКА</div>
<div class="t" style="left:1030.6px;top:33.1px;font-size:10.8px;color:#1e1e1e;transform:scaleX(1.070);transform-origin:0 0">КОМАНДА</div>
<div class="t" style="left:1105.2px;top:33.1px;font-size:10.8px;color:#1e1e1e;transform:scaleX(0.958);transform-origin:0 0">SQL</div>
<div class="t" style="left:1144.2px;top:33.1px;font-size:10.8px;color:#1e1e1e;transform:scaleX(1.057);transform-origin:0 0">ФОРМАТ</div>
<div class="t" style="left:1211.2px;top:33.1px;font-size:10.8px;color:#1e1e1e;transform:scaleX(0.953);transform-origin:0 0">СЕРВИС</div>
<div class="t" style="left:653.0px;top:51.3px;font-size:10.8px;color:#1e1e1e;transform:scaleX(0.921);transform-origin:0 0">ТЕСТ</div>
<div class="t" style="left:698.0px;top:51.3px;font-size:10.8px;color:#1e1e1e;transform:scaleX(0.988);transform-origin:0 0">АРХИТЕКТУРА</div>
<div class="t" style="left:791.6px;top:51.3px;font-size:10.8px;color:#1e1e1e;transform:scaleX(1.055);transform-origin:0 0">АНАЛИЗ</div>
<div class="t" style="left:857.0px;top:51.3px;font-size:10.8px;color:#1e1e1e;transform:scaleX(1.049);transform-origin:0 0">ОКНО</div>
<div class="t" style="left:907.8px;top:51.3px;font-size:10.8px;color:#1e1e1e;transform:scaleX(1.026);transform-origin:0 0">СПРАВКА</div>
<svg class="a" style="left:653px;top:71px" width="5" height="17"><g fill="#b8b8c0"><rect x="0" y="0" width="1" height="1"/><rect x="2" y="2" width="1" height="1"/><rect x="0" y="4" width="1" height="1"/><rect x="2" y="6" width="1" height="1"/><rect x="0" y="8" width="1" height="1"/><rect x="2" y="10" width="1" height="1"/><rect x="0" y="12" width="1" height="1"/><rect x="2" y="14" width="1" height="1"/></g></svg>
<svg class="a" style="left:666px;top:74px" width="13" height="13" viewBox="0 0 13 13"><circle cx="6.5" cy="6.5" r="6.2" fill="#1c5a9a"/><path d="M3 6.5 L6.5 3 V5 H10 V8 H6.5 V10Z" fill="#fff"/></svg>
<svg class="a" style="left:685.0px;top:79px" width="5" height="3"><path d="M0 0H5L2.5 3Z" fill="#717171"/></svg>
<svg class="a" style="left:697px;top:74px" width="13" height="13" viewBox="0 0 13 13"><circle cx="6.5" cy="6.5" r="6" fill="#cfcfd4"/><path d="M10 6.5 L6.5 3 V5 H3 V8 H6.5 V10Z" fill="#f2f2f4"/></svg>
<div class="a" style="left:718px;top:72px;width:1px;height:16px;background:#ccced6"></div>
<svg class="a" style="left:726px;top:73px" width="14" height="15" viewBox="0 0 14 15"><rect x="1" y="1" width="6" height="7" fill="#fff" stroke="#c9a040"/><path d="M3.5 4.5 H10 L12.5 7 V14 H3.5Z" fill="#fff" stroke="#222" stroke-width="1.3"/></svg>
<svg class="a" style="left:746.5px;top:79px" width="5" height="3"><path d="M0 0H5L2.5 3Z" fill="#717171"/></svg>
<svg class="a" style="left:759px;top:73px" width="13" height="14" viewBox="0 0 13 14"><path d="M0.5 5 H5 L6 6 H12.5 V13.5 H0.5Z" fill="#333"/><path d="M2 10 L4 7 H13 L11 13 H0.5Z" fill="#555"/><path d="M5 4 A4 4 0 0 1 11 2" stroke="#2a70c8" stroke-width="1.8" fill="none"/><path d="M9 0 L12 2 L9 4Z" fill="#2a70c8"/></svg>
<svg class="a" style="left:780px;top:74px" width="12" height="12" viewBox="0 0 12 12"><path d="M0 0H10L12 2V12H0Z" fill="#222"/><rect x="2.5" y="0.5" width="6" height="4" fill="#f0f0f0"/><rect x="6" y="1" width="1.5" height="3" fill="#222"/></svg>
<svg class="a" style="left:800px;top:72px" width="14" height="14" viewBox="0 0 14 14"><path d="M5 0H12L14 2V9H5Z" fill="#222"/><rect x="7" y="0.5" width="4" height="3" fill="#f0f0f0"/><path d="M0 5H7L9 7V14H0Z" fill="#222" stroke="#f3f3f6" stroke-width="0.8"/><rect x="2" y="5.5" width="4" height="3" fill="#f0f0f0"/></svg>
<div class="a" style="left:820px;top:72px;width:1px;height:16px;background:#ccced6"></div>
<svg class="a" style="left:828px;top:73px" width="12" height="14" viewBox="0 0 12 14"><path d="M2 2 V7 H7" fill="none" stroke="#c4c4ca" stroke-width="2"/><path d="M3 6 C5 1 12 2 11 7 C10.5 10 8 12 6 13" fill="none" stroke="#c4c4ca" stroke-width="2"/></svg>
<svg class="a" style="left:849.0px;top:79px" width="5" height="3"><path d="M0 0H5L2.5 3Z" fill="#717171"/></svg>
<svg class="a" style="left:862px;top:73px" width="12" height="14" viewBox="0 0 12 14"><path d="M10 2 V7 H5" fill="none" stroke="#c4c4ca" stroke-width="2"/><path d="M9 6 C7 1 0 2 1 7 C1.5 10 4 12 6 13" fill="none" stroke="#c4c4ca" stroke-width="2"/></svg>
<svg class="a" style="left:882.5px;top:79px" width="5" height="3"><path d="M0 0H5L2.5 3Z" fill="#717171"/></svg>
<div class="a" style="left:893px;top:72px;width:1px;height:16px;background:#ccced6"></div>
<svg class="a" style="left:904px;top:75px" width="10" height="11"><path d="M0 0L9.5 5.5L0 11Z" fill="#388a34"/></svg>
<div class="t" style="left:920px;top:74.9px;font-size:11.3px;color:#1e1e1e;">Запуск</div>
<svg class="a" style="left:962.2px;top:79px" width="5" height="3"><path d="M0 0H5L2.5 3Z" fill="#555"/></svg>
<div class="a" style="left:973px;top:71px;width:61px;height:18px;background:#fcfcfd;border:1px solid #e4e4ea"></div>
<div class="t" style="left:977px;top:75.0px;font-size:11.2px;color:#1e1e1e;">Debug</div>
<svg class="a" style="left:1024.5px;top:79px" width="5" height="3"><path d="M0 0H5L2.5 3Z" fill="#555"/></svg>
<div class="a" style="left:1040px;top:72px;width:1px;height:16px;background:#ccced6"></div>
<svg class="a" style="left:1048px;top:73px" width="14" height="13" viewBox="0 0 14 13"><path d="M4 0.5H12L13.5 2V9H4Z" fill="#222"/><rect x="6" y="1" width="4" height="3" fill="#eee"/><circle cx="4.5" cy="8" r="3" fill="#fff" stroke="#2a70c8" stroke-width="1.5"/><path d="M2.5 10 L0.5 12.5" stroke="#2a70c8" stroke-width="1.8"/></svg>
<svg class="a" style="left:1068px;top:82px" width="6" height="6"><path d="M0 0H5M0 2.5H5L2.5 5.5Z" fill="#555" stroke="#555" stroke-width="0.5"/></svg>
<svg class="a" style="left:1080px;top:71px" width="5" height="17"><g fill="#c4c4cc"><rect x="0" y="0" width="1" height="1"/><rect x="2" y="2" width="1" height="1"/><rect x="0" y="4" width="1" height="1"/><rect x="2" y="6" width="1" height="1"/><rect x="0" y="8" width="1" height="1"/><rect x="2" y="10" width="1" height="1"/><rect x="0" y="12" width="1" height="1"/><rect x="2" y="14" width="1" height="1"/></g></svg>
<svg class="a" style="left:1089px;top:73px" width="14" height="14"><path d="M7 1V13M2 4H12M3 7H11" stroke="#c8c8ce" stroke-width="1.6"/></svg>
<div class="a" style="left:1111px;top:72px;width:1px;height:16px;background:#d6d6dc"></div>
<svg class="a" style="left:1118px;top:73px" width="14" height="14"><path d="M1 1V13M3 4H10M3 9H13" stroke="#c8c8ce" stroke-width="1.6" fill="none"/></svg>
<svg class="a" style="left:1138px;top:73px" width="14" height="14"><path d="M2 5H12M2 9H12M7 2V12" stroke="#c8c8ce" stroke-width="1.6" fill="none"/></svg>
<svg class="a" style="left:1158px;top:73px" width="14" height="14"><path d="M13 1V13M1 4H11M4 9H11" stroke="#c8c8ce" stroke-width="1.6" fill="none"/></svg>
<svg class="a" style="left:1178px;top:73px" width="14" height="14"><path d="M1 1H13M4 1V11M10 1V8" stroke="#c8c8ce" stroke-width="1.6" fill="none"/></svg>
<svg class="a" style="left:1198px;top:73px" width="14" height="14"><path d="M7 1V13M3 4V10M11 4V10" stroke="#c8c8ce" stroke-width="1.6" fill="none"/></svg>
<svg class="a" style="left:1218px;top:73px" width="14" height="14"><path d="M1 13H13M4 3V13M10 6V13" stroke="#c8c8ce" stroke-width="1.6" fill="none"/></svg>
<div class="a" style="left:1243px;top:72px;width:1px;height:16px;background:#d6d6dc"></div>
<svg class="a" style="left:1250px;top:72px" width="6" height="16"><rect x="0" y="0" width="1.5" height="1.5" fill="#555"/><rect x="4" y="0" width="1.5" height="1.5" fill="#555"/><path d="M0 10H5.5M0 12.5H5.5L2.75 15.5Z" fill="#555" stroke="#555" stroke-width="0.6"/></svg>
<div class="a" style="left:643px;top:99px;width:5px;height:97px;background:#cfd0d8"></div>
<div class="a" style="left:643px;top:208px;width:5px;height:96px;background:#cfd0d8"></div>
<div class="t" style="left:652.5px;top:99.5px;font-size:11.3px;color:#444;writing-mode:vertical-rl">Источники данных</div>
<div class="t" style="left:652.5px;top:208px;font-size:11.3px;color:#444;writing-mode:vertical-rl">Панель элементов</div>
<div class="a" style="left:1279px;top:100px;width:5px;height:121px;background:#cfd0d8"></div>
<div class="a" style="left:1279px;top:234px;width:5px;height:133px;background:#cfd0d8"></div>
<div class="t" style="left:1261.5px;top:100px;font-size:11.1px;color:#444;writing-mode:vertical-rl">Обозреватель решений</div>
<div class="t" style="left:1261.5px;top:234.5px;font-size:11px;color:#444;writing-mode:vertical-rl">Командный обозреватель</div>
<div class="a" style="left:671px;top:99px;width:217px;height:19px;background:#007acc"></div>
<div class="t" style="left:675.5px;top:103.3px;font-size:11.2px;color:#fff;">VisualizerControl.cs [Конструктор]</div>
<svg class="a" style="left:857px;top:104px" width="10" height="9"><path d="M0 4.5H4M4 1.5V7.5M4 2H8.5V6.5H4" stroke="#fff" stroke-width="1.1" fill="none"/></svg>
<svg class="a" style="left:875px;top:103px" width="9" height="9"><path d="M0.5 0.5L8.5 8.5M8.5 0.5L0.5 8.5" stroke="#fff" stroke-width="1.5"/></svg>
<div class="t" style="left:892.5px;top:103.4px;font-size:10.75px;color:#1e1e1e;">ClassDiagram1.cd*</div>
<div class="t" style="left:1058.5px;top:103.2px;font-size:10.9px;color:#6d6d6d;">VisualizerControl.Designer.cs</div>
<svg class="a" style="left:1210px;top:103px" width="9" height="9"><path d="M0.5 1 L3 3.5 L1 6 M2 3 H8 V7 H3Z" fill="#555" stroke="#555" stroke-width="0.8"/></svg>
<svg class="a" style="left:1227px;top:103px" width="9" height="9"><path d="M0.5 0.5L8.5 8.5M8.5 0.5L0.5 8.5" stroke="#555" stroke-width="1.4"/></svg>
<svg class="a" style="left:1244px;top:106px" width="7" height="4"><path d="M0 0H7L3.5 4Z" fill="#555"/></svg>
<div class="a" style="left:671px;top:116px;width:584px;height:2px;background:#007acc"></div>
<div class="a" style="left:671px;top:118px;width:584px;height:552px;background:#fdfdfd"></div>
<div class="a" style="left:683.5px;top:131px;width:508px;height:42px;border:1px dotted #8a8a8a;background:#f9f9f9"></div>
<div class="a" style="left:690px;top:138px;width:51px;height:22px;background:#f6f6f6;border:1px solid #222"></div>
<div class="t" style="left:697px;top:143.8px;font-size:11.5px;color:#111;">1024</div>
<div class="a" style="left:741px;top:138px;width:308px;height:22px;background:#3898f4"></div>
<div class="a" style="left:1049px;top:138px;width:76px;height:22px;background:#fff;border:1px solid #333"></div>
<div class="a" style="left:1051px;top:140px;width:72px;height:18px;border:1px solid #aaa"></div>
<div class="t" style="left:1053px;top:143.2px;font-size:11px;color:#111;">0</div>
<div class="a" style="left:1107px;top:141px;width:15px;height:16px;background:#f4f4f6;border:1px solid #d6d6dc"></div>
<svg class="a" style="left:1110px;top:142px" width="9" height="14"><path d="M1 5L4.5 2L8 5ZM1 9L4.5 12L8 9Z" fill="#8a8ad0"/></svg>
<div class="a" style="left:1125px;top:138px;width:52px;height:22px;background:#f6f6f6;border:1px solid #222"></div>
<div class="t" style="left:1134.5px;top:143.8px;font-size:11.5px;color:#111;">1024</div>
<div class="a" style="left:1187px;top:148px;width:8px;height:8px;border:1.3px solid #222;border-radius:2.5px;background:#fff"></div>
<div class="a" style="left:1187px;top:169px;width:8px;height:8px;border:1.3px solid #222;border-radius:2.5px;background:#fff"></div>
<div class="a" style="left:933px;top:169px;width:8px;height:8px;border:1.3px solid #222;border-radius:2.5px;background:#fff"></div>
<div class="t" style="left:671px;top:678.0px;font-size:11.6px;color:#1e1e1e;">Список ошибок</div>
<div class="a" style="left:671px;top:695px;width:84px;height:4px;background:#d0d1d9"></div>
<div class="a" style="left:641px;top:700px;width:643px;height:20px;background:#007acc"></div><div class="a" style="left:641px;top:720px;width:643px;height:2px;background:#e4e8ee"></div>
<div class="t" style="left:646.5px;top:705.8px;font-size:11.3px;color:#fff;">Готово</div>
<svg class="a" style="left:1272px;top:710px" width="10" height="10"><g fill="#5aa0d8"><rect x="7" y="1" width="2" height="2"/><rect x="4" y="4" width="2" height="2"/><rect x="7" y="4" width="2" height="2"/><rect x="1" y="7" width="2" height="2"/><rect x="4" y="7" width="2" height="2"/><rect x="7" y="7" width="2" height="2"/></g></svg>
</div></body></html>
